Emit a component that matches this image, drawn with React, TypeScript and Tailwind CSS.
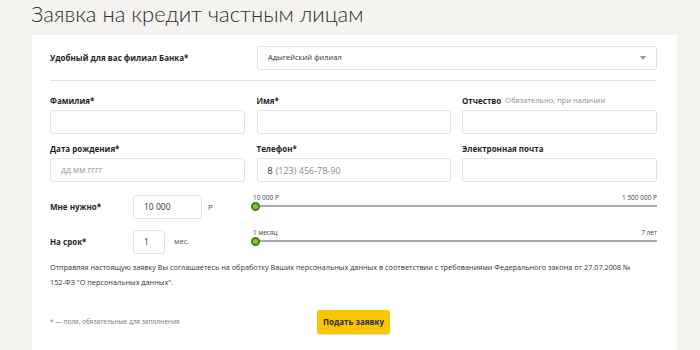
import React from "react";

const font = { fontFamily: '"Open Sans", "Liberation Sans", sans-serif' };

function Label({ children }: { children: React.ReactNode }) {
  return (
    <div className="h-[15px] flex items-center text-[8px] font-bold text-[#1f1f1f] leading-none">
      {children}
    </div>
  );
}

function Input({ placeholder, value, w }: { placeholder?: string; value?: string; w?: string }) {
  return (
    <div
      className={`h-[24px] ${w ?? "w-full"} border border-[#e3e3e3] rounded-[3px] bg-white flex items-center px-[10px] text-[8.5px] leading-none`}
    >
      {value ? (
        <span className="text-[#333]">{value}</span>
      ) : placeholder ? (
        <span className="text-[#9a9a9a]">{placeholder}</span>
      ) : null}
    </div>
  );
}

function Slider({ left, right }: { left: string; right: string }) {
  return (
    <div className="flex flex-col">
      <div className="flex justify-between text-[6.5px] text-[#444] leading-none h-[8px] items-end">
        <span className="-ml-[1px]">{left}</span>
        <span>{right}</span>
      </div>
      <div className="relative h-[10px] flex items-center">
        <div className="h-[2px] w-full bg-[#a9a9a9]" />
        <div className="absolute left-[-3px] top-[0.5px] w-[9px] h-[9px] rounded-full bg-[#8cc63f] border-[2px] border-[#3f7f1f]" />
      </div>
    </div>
  );
}

export default function App() {
  return (
    <div className="w-[700px] h-[350px] bg-[#f4f3ef] overflow-hidden" style={font}>
      <div className="h-[35px] pl-[31px] flex items-center">
        <h1
          className="text-[22px] font-light text-[#2e2e2e] leading-none -mt-[7px]"
          style={{ fontFamily: 'Lato, "Open Sans", sans-serif' }}
        >
          Заявка на кредит частным лицам
        </h1>
      </div>
      <div className="ml-[32px] w-[645px] h-[315px] bg-white pl-[18px] pr-[20px] pt-[11px]">
        <div className="grid grid-cols-[195px_1fr] gap-x-[12px] items-center">
          <Label>Удобный для вас филиал Банка*</Label>
          <div className="h-[24px] border border-[#e3e3e3] rounded-[3px] flex items-center justify-between px-[10px]">
            <span className="text-[7.5px] text-[#333]">Адыгейский филиал</span>
            <svg width="6" height="4" viewBox="0 0 6 4">
              <path d="M0 0 L6 0 L3 4 Z" fill="#9a9a9a" />
            </svg>
          </div>
        </div>
        <div className="h-[1px] bg-[#e3e3e3] mt-[10px]" />

        <div className="grid grid-cols-[195px_194px_195px] gap-x-[11.5px] mt-[12px]">
          <Label>Фамилия*</Label>
          <Label>Имя*</Label>
          <div className="h-[15px] flex items-center gap-[4px] leading-none">
            <span className="text-[8px] font-bold text-[#1f1f1f]">Отчество</span>
            <span className="text-[7.5px] text-[#8a8a8a]">Обязательно, при наличии</span>
          </div>
          <div className="mt-[2px]"><Input /></div>
          <div className="mt-[2px]"><Input /></div>
          <div className="mt-[2px]"><Input /></div>

          <div className="mt-[7px]"><Label>Дата рождения*</Label></div>
          <div className="mt-[7px]"><Label>Телефон*</Label></div>
          <div className="mt-[7px]"><Label>Электронная почта</Label></div>
          <div className="mt-[2px]"><Input placeholder="дд.мм.гггг" /></div>
          <div className="mt-[2px]">
            <div className="h-[24px] w-full border border-[#e3e3e3] rounded-[3px] flex items-center px-[10px] text-[9px] leading-none">
              <span className="text-[#333]">8</span>
              <span className="text-[#8a8a8a] ml-[3px]">(123) 456-78-90</span>
            </div>
          </div>
          <div className="mt-[2px]"><Input /></div>
        </div>

        <div className="flex items-center mt-[13px]">
          <div className="w-[83px] text-[8px] font-bold text-[#1f1f1f]">Мне нужно*</div>
          <Input value="10 000" w="w-[69px]" />
          <div className="w-[52px] pl-[6px] text-[8px] text-[#555]">Р</div>
          <div className="flex-1 -mt-[10px]">
            <Slider left="10 000 Р" right="1 500 000 Р" />
          </div>
        </div>

        <div className="flex items-center mt-[11px]">
          <div className="w-[83px] text-[8px] font-bold text-[#1f1f1f]">На срок*</div>
          <Input value="1" w="w-[32px]" />
          <div className="w-[89px] pl-[9px] text-[7.5px] text-[#555]">мес.</div>
          <div className="flex-1 -mt-[10px]">
            <Slider left="1 месяц" right="7 лет" />
          </div>
        </div>

        <p className="mt-[6px] text-[7.3px] leading-[15px] text-[#333]">
          Отправляя настоящую заявку Вы соглашаетесь на обработку Ваших персональных данных в соответствии с требованиями Федерального закона от 27.07.2008 №{" "}
          <span className="whitespace-nowrap">152-ФЗ</span> "О персональных данных".
        </p>

        <div className="flex items-center mt-[20px]">
          <div className="w-[267px] text-[6.5px] text-[#777]">* — поля, обязательные для заполнения</div>
          <button className="h-[24px] w-[73px] bg-[#fbc600] rounded-[3px] text-[8px] font-bold text-[#2b2b2b] shadow-[0_1px_1px_rgba(0,0,0,0.15)]">
            Подать заявку
          </button>
        </div>
      </div>
    </div>
  );
}
